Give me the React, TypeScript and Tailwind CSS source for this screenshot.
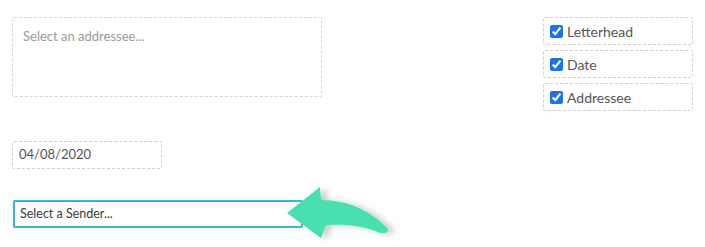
import React from 'react';

const OPTIONS = ['Letterhead', 'Date', 'Addressee'];

function Arrow() {
  return (
    <svg
      className="absolute left-[280px] top-[180px] pointer-events-none"
      width="125"
      height="66"
      viewBox="280 180 125 66"
    >
      <defs>
        <filter id="sh" x="-20%" y="-30%" width="160%" height="180%">
          <feDropShadow dx="6" dy="1" stdDeviation="3" floodColor="#000" floodOpacity="0.2" />
        </filter>
      </defs>
      <path
        d="M287 213 L320 187 L321 200 C350 200 372 212 388 229 C389 232 385 234 380 233 C365 226 345 224 326 225 L321 238 Z"
        fill="#48e0b1"
        filter="url(#sh)"
      />
    </svg>
  );
}

export default function App() {
  return (
    <div className="relative w-[705px] h-[247px] bg-white font-['Lato',sans-serif]">
      <div className="flex justify-between pl-3 pr-[12px] pt-[17px]">
        <div className="flex flex-col">
          <div className="w-[310px] h-[80px] border border-dashed border-[#d6d6d6] rounded-[2px] px-[10px] pt-[9px] text-[13px] text-[#9a9a9a]">
            Select an addressee...
          </div>
          <div className="mt-[44px] w-[150px] h-[28px] border border-dashed border-[#cfcfcf] rounded-[2px] px-[6px] flex items-center text-[13px] text-[#555]">
            04/08/2020
          </div>
          <div className="mt-[31px] ml-px w-[290px] h-[28px] border-2 border-[#3fb3d8] rounded-[2px] px-[5px] flex items-center text-[12.5px] text-[#3a3a3a] shadow-[0_0_1px_#8fd3ea]">
            Select a Sender...
          </div>
        </div>
        <div className="flex flex-col gap-[5px]">
          {OPTIONS.map((label) => (
            <label
              key={label}
              className="w-[150px] h-[28px] border border-dashed border-[#cfcfcf] rounded-[2px] pl-[6px] flex items-center gap-[4px] text-[14px] text-[#555]"
            >
              <input type="checkbox" defaultChecked className="w-[13px] h-[13px] m-0 accent-[#1a73e8]" />
              {label}
            </label>
          ))}
        </div>
      </div>
      <Arrow />
    </div>
  );
}
